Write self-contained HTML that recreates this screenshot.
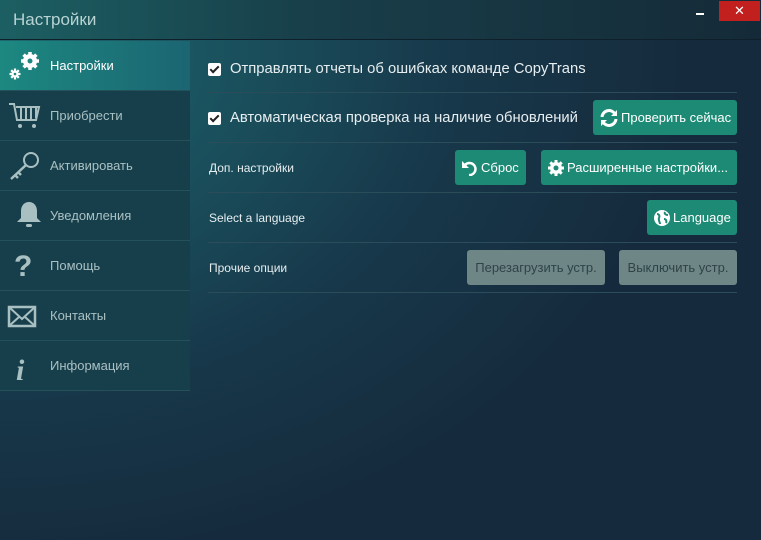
<!DOCTYPE html>
<html><head><meta charset="utf-8"><style>
*{margin:0;padding:0;box-sizing:border-box}
body{width:761px;height:540px;overflow:hidden;font-family:"Liberation Sans",sans-serif;position:relative;
background:radial-gradient(ellipse 700px 520px at 0% 10%,#1d6a70 0%,#1a4f5c 35%,#17384a 65%,#152a3c 100%);}
.title{position:absolute;left:0;top:0;width:761px;height:40px;background:linear-gradient(90deg,#1c5f62 0%,#183f4a 40%,#152a38 100%);border-bottom:1px solid #10202a}
.title span{position:absolute;left:13px;top:10px;font-size:17px;color:#b8d3d3}
.close{position:absolute;right:1px;top:1px;width:41px;height:20px;background:#c1201f;color:#fff;font-size:13px;text-align:center;line-height:20px}
.min{position:absolute;left:696px;top:13px;width:8px;height:2px;background:#fff}
.side{position:absolute;left:0;top:41px;width:190px}
.it{height:50px;border-bottom:1px solid #24515a;background:#173f4b;position:relative;color:#a9c0c3;font-size:13px}
.it span{position:absolute;left:50px;top:17px}
.it svg{position:absolute;left:7px;top:10px}
.it.a{background:linear-gradient(90deg,#1c8880,#1b6572);color:#fff}
.row{position:absolute;left:208px;width:529px;border-bottom:1px solid #2b4d5a;color:#e7eef0}
.cb{position:absolute;left:0;width:13px;height:13px;background:#fff;border-radius:2px}
.cb:after{content:"";position:absolute;left:4px;top:1px;width:3px;height:7px;border:solid #222;border-width:0 2px 2px 0;transform:rotate(45deg)}
.btn{position:absolute;height:35px;background:#1c8a74;border-radius:3px;color:#fff;font-size:13px;line-height:35px;padding-left:6px;white-space:nowrap}
.btn svg{vertical-align:middle;margin-right:2px;position:relative;top:-1px}
.btn.g{background:#6f8686;color:#2f4347;text-align:center;padding:0}
.lab{position:absolute;font-size:12px;color:#e7eef0}
.big{position:absolute;left:22px;top:17px;font-size:14.8px}
</style></head><body>
<div class="title"><span>Настройки</span><div class="min"></div><div class="close">✕</div></div>
<div class="side">
<div class="it a"><svg width="34" height="30" viewBox="0 0 34 30">
<g fill="#fff"><circle cx="23" cy="10" r="7"/><g stroke="#fff" stroke-width="3.5"><path d="M23 1v18M14 10h18M16.6 3.6l12.8 12.8M29.4 3.6L16.6 16.4"/></g></g><circle cx="23" cy="10" r="2.5" fill="#1c8880"/>
<g fill="#fff"><circle cx="8" cy="23" r="3.5"/><g stroke="#fff" stroke-width="2.2"><path d="M8 17.5v11M2.5 23h11M4.2 19.2l7.6 7.6M11.8 19.2l-7.6 7.6"/></g></g><circle cx="8" cy="23" r="1.3" fill="#1c8880"/></svg><span>Настройки</span></div>
<div class="it"><svg width="34" height="30" viewBox="0 0 34 30"><path d="M2 3h5l3 16h19l3-13H9" fill="none" stroke="#a9c0c3" stroke-width="2"/><path d="M14 7v11M19 7v11M24 7v11M29 7v10" stroke="#a9c0c3" stroke-width="2"/><circle cx="13" cy="25" r="2" fill="#a9c0c3"/><circle cx="27" cy="25" r="2" fill="#a9c0c3"/></svg><span>Приобрести</span></div>
<div class="it"><svg width="34" height="30" viewBox="0 0 34 30"><circle cx="24" cy="9" r="7" fill="none" stroke="#a9c0c3" stroke-width="2"/><path d="M19 14L4 28M8 24l3 3M11 21l3 3" stroke="#a9c0c3" stroke-width="2.5"/></svg><span>Активировать</span></div>
<div class="it"><svg width="34" height="30" viewBox="0 0 34 30"><path d="M22 1c-5 0-8 4-8 9v7l-4 4h24l-4-4v-7c0-5-3-9-8-9z" fill="#a9c0c3"/><rect x="19" y="23" width="6" height="3" rx="1.5" fill="#a9c0c3"/></svg><span>Уведомления</span></div>
<div class="it"><svg width="34" height="30" viewBox="0 0 34 30"><text x="7" y="25" font-size="30" font-weight="bold" fill="#a9c0c3" font-family="Liberation Sans">?</text></svg><span>Помощь</span></div>
<div class="it"><svg width="34" height="30" viewBox="0 0 34 30"><rect x="2" y="6" width="26" height="19" fill="none" stroke="#a9c0c3" stroke-width="2.5"/><path d="M2 6l13 12 13-12M2 25l10-9M28 25l-10-9" fill="none" stroke="#a9c0c3" stroke-width="2"/></svg><span>Контакты</span></div>
<div class="it"><svg width="34" height="30" viewBox="0 0 34 30"><text x="9" y="29" font-size="30" font-weight="bold" font-style="italic" fill="#a9c0c3" font-family="Liberation Serif">i</text></svg><span>Информация</span></div>
</div>
<div class="row" style="top:44px;height:49px"><div class="cb" style="top:19px"></div><div class="big">Отправлять отчеты об ошибках команде CopyTrans</div></div>
<div class="row" style="top:93px;height:50px"><div class="cb" style="top:19px"></div><div class="big">Автоматическая проверка на наличие обновлений</div>
<div class="btn" style="left:385px;top:7px;width:144px"><svg width="20" height="18" viewBox="0 0 20 18"><path d="M3 8a7 7 0 0 1 13-3M17 10a7 7 0 0 1-13 3" fill="none" stroke="#fff" stroke-width="3"/><path d="M18 1v6h-6zM2 17v-6h6z" fill="#fff"/></svg>Проверить сейчас</div></div>
<div class="row" style="top:143px;height:50px"><div class="lab" style="left:1px;top:18px">Доп. настройки</div>
<div class="btn" style="left:247px;top:7px;width:71px"><svg width="18" height="16" viewBox="0 0 18 16"><path d="M4 5a6 6 0 1 1 4 10" fill="none" stroke="#fff" stroke-width="2.5"/><path d="M1 1v7h7z" fill="#fff"/></svg>Сброс</div>
<div class="btn" style="left:333px;top:7px;width:196px"><svg width="18" height="18" viewBox="0 0 18 18"><circle cx="9" cy="9" r="6" fill="#fff"/><path d="M9 1v16M1 9h16M3.3 3.3l11.4 11.4M14.7 3.3L3.3 14.7" stroke="#fff" stroke-width="3"/><circle cx="9" cy="9" r="2.5" fill="#1c8a74"/></svg>Расширенные настройки...</div></div>
<div class="row" style="top:193px;height:50px"><div class="lab" style="left:1px;top:18px">Select a language</div>
<div class="btn" style="left:439px;top:7px;width:90px"><svg width="18" height="18" viewBox="0 0 18 18"><circle cx="9" cy="9" r="8" fill="#fff"/><path d="M4 5c2 0 3 2 2 4s1 4 1 6M12 3c-1 2 1 3 3 3M11 10c2 0 3 2 2 4" fill="none" stroke="#1c8a74" stroke-width="2"/></svg>Language</div></div>
<div class="row" style="top:243px;height:50px"><div class="lab" style="left:1px;top:18px">Прочие опции</div>
<div class="btn g" style="left:259px;top:7px;width:138px">Перезагрузить устр.</div>
<div class="btn g" style="left:411px;top:7px;width:118px">Выключить устр.</div></div>
</body></html>
